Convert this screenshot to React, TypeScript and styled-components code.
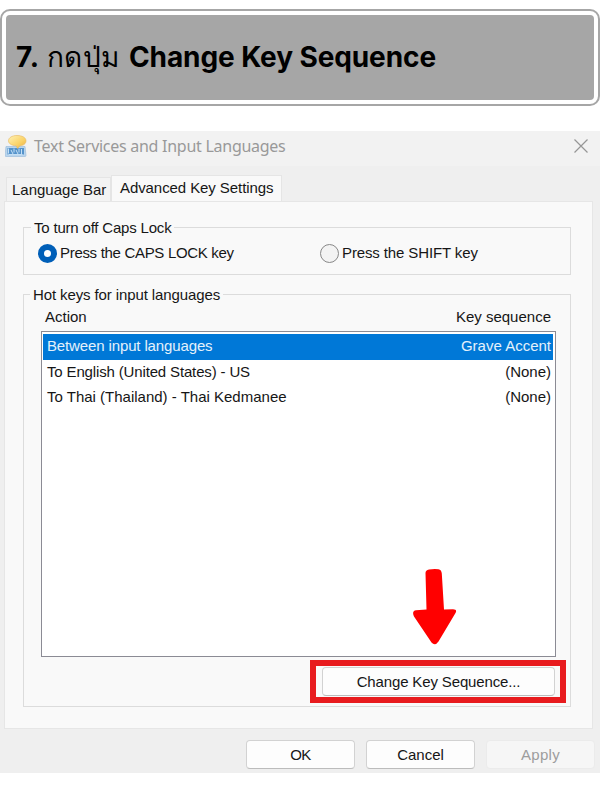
import React from "react";
import styled, { createGlobalStyle } from "styled-components";

const GlobalStyle = createGlobalStyle`
  *, *::before, *::after { box-sizing: border-box; }
  body { margin: 0; background: #fff; }
`;

const Page = styled.main`
  width: 600px;
  height: 800px;
  padding-top: 9px;
  overflow: hidden;
  background: #fff;
  color: #161616;
  font: 15px/20px "Liberation Sans", Arial, sans-serif;
`;

const StepBanner = styled.header`
  height: 97px;
  margin-bottom: 25px;
  padding: 4px;
  border: 2px solid #a6a6a6;
  border-radius: 10px;
  background: #fff;
`;

const StepTitle = styled.h1`
  display: flex;
  align-items: center;
  height: 85px;
  margin: 0;
  padding: 0 0 2px 10px;
  border-radius: 4px;
  background: #a6a6a6;
  color: #000;
  font: 700 28px/40px Inter, "Noto Sans", sans-serif;
  letter-spacing: -0.1px;
  white-space: pre;
`;

const StepNumber = styled.span`
  width: 31px;
  letter-spacing: 0.9px;
`;

const ThaiWord = styled.span`
  width: 82px;
  font-weight: 400;
  letter-spacing: 0.3px;
`;

const Dialog = styled.section`
  display: flex;
  flex-direction: column;
  height: 642px;
  background: #efefef;
`;

const TitleBar = styled.div`
  display: flex;
  align-items: center;
  height: 35px;
  padding: 0 11px 6px 5px;
  background: #f2f2f2;
`;

const TitleText = styled.h2`
  flex: 1;
  margin: 0 0 0 7px;
  color: #999;
  font: 400 16px/22px "Noto Sans", sans-serif;
  letter-spacing: -0.27px;
`;

const TabStrip = styled.div`
  display: flex;
  align-items: flex-end;
  height: 35px;
  padding: 9px 0 0 6px;
`;

const Tab = styled.div<{ $active?: boolean }>`
  width: ${(p) => (p.$active ? 171 : 105)}px;
  height: ${(p) => (p.$active ? 27 : 24)}px;
  margin-bottom: ${(p) => (p.$active ? -1 : 0)}px;
  padding: ${(p) => (p.$active ? "2px 0 0 8px" : "2px 0 0 5px")};
  border: 1px solid #e5e5e5;
  border-bottom: 0;
  background: ${(p) => (p.$active ? "#f9f9f9" : "#f3f3f3")};
  letter-spacing: ${(p) => (p.$active ? -0.08 : 0)}px;
  white-space: nowrap;
`;

const TabPanel = styled.div`
  height: 528px;
  margin: 0 7px 0 4px;
  padding: 25px 21px 0 18px;
  border: 1px solid #e6e6e6;
  background: #f9f9f9;
`;

const Group = styled.section<{ $height: number }>`
  height: ${(p) => p.$height}px;
  margin-bottom: 19px;
  border: 1px solid #dcdcdc;
`;

const GroupLabel = styled.h3<{ $tracking: number; $inset: number }>`
  width: fit-content;
  height: 20px;
  margin: -10px 0 0 ${(p) => p.$inset}px;
  padding: 0 3px;
  background: #f9f9f9;
  font: inherit;
  letter-spacing: ${(p) => p.$tracking}px;
  white-space: nowrap;
`;

const RadioRow = styled.div`
  display: grid;
  grid-template-columns: 282px 1fr;
  padding: 5px 0 0 14px;
`;

const RadioOption = styled.label<{ $tracking: number }>`
  display: flex;
  align-items: center;
  gap: 3px;
  letter-spacing: ${(p) => p.$tracking}px;
  white-space: nowrap;
`;

const RadioMark = styled.span<{ $checked?: boolean }>`
  width: 19px;
  height: 19px;
  flex: none;
  border: ${(p) => (p.$checked ? "6px solid #005fb8" : "1.5px solid #888")};
  border-radius: 50%;
  background: ${(p) => (p.$checked ? "#fff" : "#f3f3f3")};
`;

const ColumnHeadings = styled.div`
  display: flex;
  justify-content: space-between;
  height: 26px;
  padding: 2px 19px 0 21px;
`;

const HotkeyList = styled.div`
  width: 515px;
  height: 326px;
  margin-left: 17px;
  padding: 2px 2px 2px 1px;
  border: 1px solid #8b8b94;
  background: #fff;
`;

const HotkeyRow = styled.div<{ $selected?: boolean; $tracking: number }>`
  display: flex;
  justify-content: space-between;
  height: 25.5px;
  padding: 2px 2px 0 4px;
  background: ${(p) => (p.$selected ? "#0078d7" : "transparent")};
  color: ${(p) => (p.$selected ? "#e4f1fb" : "#161616")};
  letter-spacing: ${(p) => p.$tracking}px;
`;

const KeyName = styled.span`
  letter-spacing: 0;
`;

const HighlightFrame = styled.div`
  display: flex;
  width: 256px;
  height: 43px;
  margin: 3px 0 0 286px;
  padding: 1px 5px 0 6px;
  border: 6px solid #e81b1e;
  background: #f9f9f9;
`;

const DialogButton = styled.button<{ $wide?: boolean; $tracking?: number }>`
  width: ${(p) => (p.$wide ? 233 : 109)}px;
  height: 29px;
  padding: 0;
  border: 1px solid #d2d2d2;
  border-bottom-color: #bcbcbc;
  border-radius: 4px;
  background: #fdfdfd;
  color: #161616;
  font: inherit;
  letter-spacing: ${(p) => p.$tracking ?? 0}px;

  &:disabled {
    border-color: #ebebeb;
    background: #f6f6f6;
    color: #9d9d9d;
  }
`;

const ButtonBar = styled.footer`
  display: flex;
  justify-content: flex-end;
  gap: 11px;
  padding: 11px 5px 0 0;
`;

const ArrowOverlay = styled.svg`
  position: absolute;
  left: 412px;
  top: 568px;
`;

const hotkeys = [
  { action: "Between input languages", keys: "Grave Accent", tracking: -0.13, selected: true },
  { action: "To English (United States) - US", keys: "(None)", tracking: -0.15 },
  { action: "To Thai (Thailand) - Thai Kedmanee", keys: "(None)", tracking: 0 },
];

const LanguageIcon = () => (
  <svg width="22" height="24" viewBox="0 0 22 24">
    <defs>
      <linearGradient id="bubble" x1="0" y1="0" x2="1" y2="1">
        <stop offset="0" stopColor="#fff2b5" />
        <stop offset="0.6" stopColor="#fad267" />
        <stop offset="1" stopColor="#e8ad42" />
      </linearGradient>
    </defs>
    <path d="M1 12.500h19l1 9q0 1-1 1H1q-1 0-1-1z" fill="#b9d5ed" stroke="#9dbddb" strokeWidth=".7" />
    <path d="M2.500 14h16.500v6.500H2.500z" fill="#5593cb" />
    <path d="M3.500 14.500v5M6 16l2 4M9 14.500v4M11 16l2 4M14 14.500v4M16.500 15v5M3.500 20.500h14" fill="none" stroke="#c4dff5" strokeWidth="1" />
    <path d="M12 1.500c5.500 0 9 2.200 9 5.300 0 3-2.600 4.800-6 5L12.500 14.500l-1.200-2.700C6.500 11.500 3.500 9.500 3.500 6.800 3.500 3.700 7 1.500 12 1.500z" fill="url(#bubble)" stroke="#e5b65b" strokeWidth=".6" />
  </svg>
);

export default function App() {
  return (
    <Page>
      <GlobalStyle />
      <StepBanner>
        <StepTitle>
          <StepNumber>7.</StepNumber>
          <ThaiWord>กดปุ่ม</ThaiWord>
          <span>Change Key Sequence</span>
        </StepTitle>
      </StepBanner>
      <Dialog>
        <TitleBar>
          <LanguageIcon />
          <TitleText>Text Services and Input Languages</TitleText>
          <svg width="16" height="16" viewBox="0 0 16 16">
            <path d="M1.500 1.500l13 13M14.500 1.500l-13 13" fill="none" stroke="#969696" strokeWidth="1.200" />
          </svg>
        </TitleBar>
        <TabStrip>
          <Tab>Language Bar</Tab>
          <Tab $active>Advanced Key Settings</Tab>
        </TabStrip>
        <TabPanel>
          <Group $height={48}>
            <GroupLabel $tracking={-0.19} $inset={7}>To turn off Caps Lock</GroupLabel>
            <RadioRow>
              <RadioOption $tracking={-0.31}>
                <RadioMark $checked />
                Press the CAPS LOCK key
              </RadioOption>
              <RadioOption $tracking={-0.12}>
                <RadioMark />
                Press the SHIFT key
              </RadioOption>
            </RadioRow>
          </Group>
          <Group $height={413}>
            <GroupLabel $tracking={-0.11} $inset={6}>Hot keys for input languages</GroupLabel>
            <ColumnHeadings>
              <span>Action</span>
              <span>Key sequence</span>
            </ColumnHeadings>
            <HotkeyList>
              {hotkeys.map((h) => (
                <HotkeyRow key={h.action} $selected={h.selected} $tracking={h.tracking}>
                  <span>{h.action}</span>
                  <KeyName>{h.keys}</KeyName>
                </HotkeyRow>
              ))}
            </HotkeyList>
            <HighlightFrame>
              <DialogButton $wide $tracking={-0.14}>Change Key Sequence...</DialogButton>
            </HighlightFrame>
          </Group>
        </TabPanel>
        <ButtonBar>
          <DialogButton $tracking={-0.6}>OK</DialogButton>
          <DialogButton>Cancel</DialogButton>
          <DialogButton disabled $tracking={0.25}>Apply</DialogButton>
        </ButtonBar>
      </Dialog>
      <ArrowOverlay width="46" height="78" viewBox="0 0 46 78">
        <path
          d="M13.500 5Q13.500 2 17 1.500 22 .6 26.500 1.200 29.500 1.800 29.800 5.500L32 41.500 41 41.200Q45.500 41.200 43.500 45L26.500 73.500Q23 78.500 19.500 74.500L2 48.500Q-.5 43 4 42.300L14.500 41.500Z"
          fill="#ff0000"
        />
      </ArrowOverlay>
    </Page>
  );
}
